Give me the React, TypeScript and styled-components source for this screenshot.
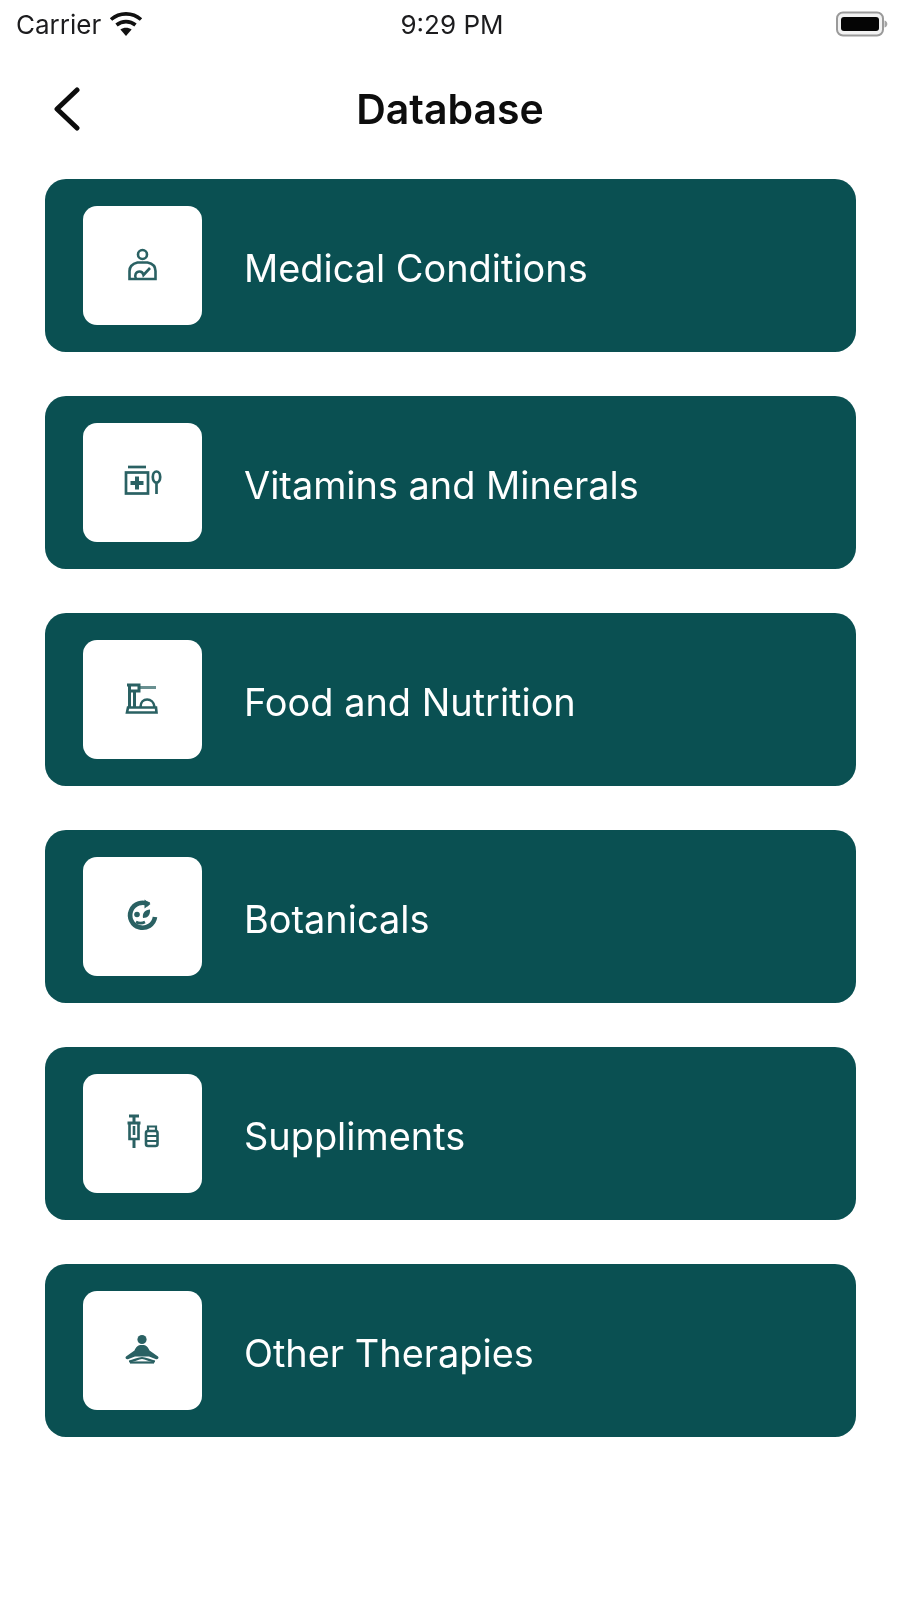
import React from "react";
import styled, { createGlobalStyle } from "styled-components";

const Global = createGlobalStyle`
  html, body { margin: 0; padding: 0; background: #fff; }
  body { font-family: Inter, "Liberation Sans", sans-serif; }
`;

const Screen = styled.div`
  width: 900px;
  height: 1598px;
  background: #fff;
  display: flex;
  flex-direction: column;
  overflow: hidden;
  filter: blur(0.5px);
`;

const StatusBar = styled.div`
  height: 48px;
  padding: 0 12px 0 16px;
  display: grid;
  grid-template-columns: 1fr auto 1fr;
  align-items: center;
  color: #1c1c1e;
  font-size: 26px;
  font-weight: 400;
`;

const StatusLeft = styled.div`
  display: flex;
  align-items: center;
  gap: 8px;
`;

const StatusRight = styled.div`
  display: flex;
  justify-content: flex-end;
`;

const NavBar = styled.header`
  height: 131px;
  padding: 0 52px 9px;
  box-sizing: border-box;
  display: grid;
  grid-template-columns: 1fr auto 1fr;
  align-items: center;
`;

const Title = styled.h1`
  margin: 0;
  font-size: 41px;
  font-weight: 600;
  color: #0d0d0d;
`;

const List = styled.main`
  padding: 0 44px 0 45px;
  display: flex;
  flex-direction: column;
  gap: 44px;
`;

const Card = styled.div`
  height: 173px;
  background: #0a5052;
  border-radius: 21px;
  padding: 0 38px;
  display: flex;
  align-items: center;
  gap: 42px;
`;

const IconBox = styled.div`
  width: 119px;
  height: 119px;
  flex: none;
  margin-top: -1px;
  border-radius: 14px;
  background: #fff;
  display: flex;
  align-items: center;
  justify-content: center;
  color: #2a6163;
`;

const Label = styled.span`
  color: #fff;
  font-size: 37.9px;
  font-weight: 400;
  margin-top: 5px;
`;

const Wifi = () => (
  <svg width="34" height="26" viewBox="0 0 34 26" fill="none" stroke="#111" strokeWidth="3.6">
    <path d="M2 8.500C10.500 1 23.500 1 32 8.500" />
    <path d="M7.500 14C13 9.500 21 9.500 26.500 14" />
    <path d="M17 25l-5.600-6.400c3.200-2.400 8-2.400 11.200 0z" fill="#111" stroke="none" />
  </svg>
);

const Battery = () => (
  <svg width="52" height="26" viewBox="0 0 52 26">
    <rect x="1" y="1.500" width="46" height="23" rx="6" fill="#f2f2f2" stroke="#9a9a9a" strokeWidth="2" />
    <rect x="5" y="6" width="38" height="14" rx="3" fill="#050505" />
    <path d="M48.500 9.500c2.200.6 2.800 2 2.800 3.500s-.6 2.900-2.800 3.500z" fill="#a5a5a5" />
  </svg>
);

const Back = () => (
  <svg width="30" height="44" viewBox="0 0 30 44" fill="none" stroke="#0d0d0d" strokeWidth="5" strokeLinecap="round" strokeLinejoin="round">
    <path d="M25 3L5 22l20 19" />
  </svg>
);

const IconSvg = styled.svg.attrs({ width: 40, height: 40, viewBox: "0 0 40 40", fill: "none", stroke: "currentColor" })`
  display: block;
`;

const PersonIcon = () => (
  <IconSvg strokeWidth="2.6">
    <circle cx="19.500" cy="9.500" r="4.500" />
    <path d="M6.500 34V26c0-5 4-7.500 8-8.500h10c5 1 8 3.500 8 8.500v8z" />
    <path d="M13 34c-2-4 0-7.500 3.500-7.500 2 0 3.500 1.500 4 3.500l6.500-7" />
  </IconSvg>
);

const JarIcon = () => (
  <IconSvg strokeWidth="2.700">
    <path d="M5 5h18" />
    <rect x="3" y="10.500" width="22" height="21" />
    <path d="M14 14.500v13M7.500 21h13" strokeWidth="4" />
    <ellipse cx="33.500" cy="15" rx="3.700" ry="5.500" />
    <path d="M33.500 20v12" />
  </IconSvg>
);

const ScaleIcon = () => (
  <IconSvg strokeWidth="2.600">
    <path d="M4 6h12v6H6" strokeWidth="3" />
    <path d="M16 8.500h17" strokeWidth="3" opacity=".7" />
    <path d="M6.500 6v22M11.500 12v16" strokeWidth="3" />
    <path d="M5 28.500h28l.5 5H4z" />
    <path d="M17.500 28c0-10 13-10 14 0" />
  </IconSvg>
);

const RingIcon = () => (
  <IconSvg strokeWidth="4.600">
    <path d="M26 8.500A12.500 12.500 0 1 0 32 21" />
    <path d="M21.500 3.500l6 4.500-6 4.500z" fill="currentColor" stroke="none" />
    <circle cx="14" cy="18.500" r="2.800" fill="currentColor" stroke="none" />
    <path d="M20 22c-1-5 2-8 7-8.500 .5 5-2 8.500-7 8.500z" fill="currentColor" stroke="none" />
    <path d="M13 26c3 1.500 6 1.500 9 0" strokeWidth="2.600" />
  </IconSvg>
);

const SyringeIcon = () => (
  <IconSvg strokeWidth="2.600">
    <path d="M6 3h10M11 3v7" strokeWidth="3" />
    <path d="M4.500 10h13" strokeWidth="3" />
    <path d="M6.500 10v16h9V10" />
    <path d="M11 13v9" />
    <path d="M11 26v9" strokeWidth="3" />
    <rect x="23" y="18" width="11.500" height="15" rx="2" />
    <path d="M25 13.500h8v4.500h-8z" strokeWidth="2.200" />
    <path d="M24 23h10M24 28h10" strokeWidth="2.200" />
  </IconSvg>
);

const MeditateIcon = () => (
  <IconSvg strokeWidth="2.200">
    <circle cx="19" cy="9.500" r="4.600" fill="currentColor" stroke="none" />
    <path d="M19 15c-4.500 0-6 2-7.500 5.500L3 26.500c-1.500 1.500.5 3.500 2.500 2.500L12 26.500h14l6.500 2.500c2 1 4-1 2.500-2.500L26.500 20.500C25 17 23.500 15 19 15z" fill="currentColor" stroke="none" />
    <path d="M6 31.500c5-.5 9-3.500 13-3.500s8 3 13 3.500" />
    <path d="M7 32.500h24" />
  </IconSvg>
);

const items: { label: string; Icon: React.FC }[] = [
  { label: "Medical Conditions", Icon: PersonIcon },
  { label: "Vitamins and Minerals", Icon: JarIcon },
  { label: "Food and Nutrition", Icon: ScaleIcon },
  { label: "Botanicals", Icon: RingIcon },
  { label: "Suppliments", Icon: SyringeIcon },
  { label: "Other Therapies", Icon: MeditateIcon },
];

export default function App() {
  return (
    <>
      <Global />
      <Screen>
        <StatusBar>
          <StatusLeft>
            <span>Carrier</span>
            <Wifi />
          </StatusLeft>
          <span>9:29 PM</span>
          <StatusRight>
            <Battery />
          </StatusRight>
        </StatusBar>
        <NavBar>
          <Back />
          <Title>Database</Title>
          <span />
        </NavBar>
        <List>
          {items.map(({ label, Icon }) => (
            <Card key={label}>
              <IconBox>
                <Icon />
              </IconBox>
              <Label>{label}</Label>
            </Card>
          ))}
        </List>
      </Screen>
    </>
  );
}
